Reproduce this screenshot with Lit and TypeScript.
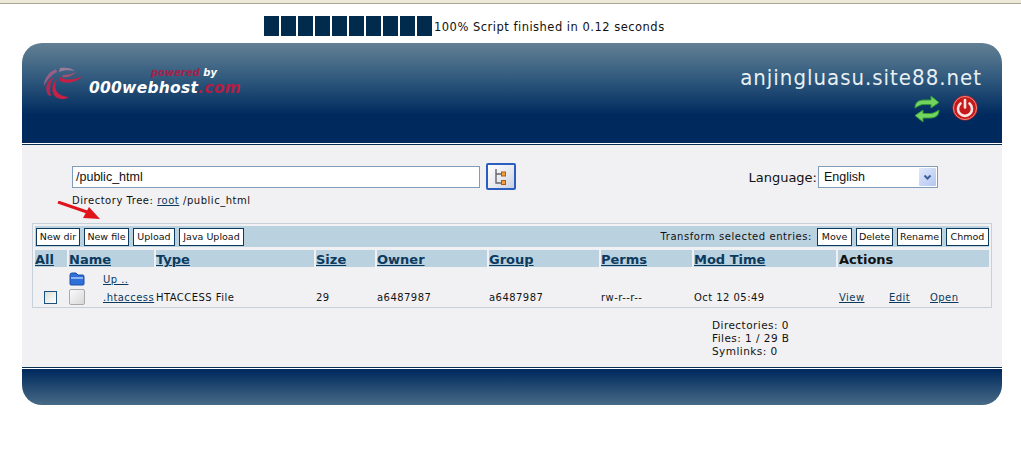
import { LitElement, html, css, svg } from "lit";
import { customElement } from "lit/decorators.js";

const HEAD = ["All", "Name", "Type", "Size", "Owner", "Group", "Perms", "Mod Time"];
const LEFT_BTNS: [string, number][] = [["New dir", 44], ["New file", 45], ["Upload", 42], ["Java Upload", 65]];
const RIGHT_BTNS: [string, number][] = [["Move", 35], ["Delete", 37], ["Rename", 45], ["Chmod", 43]];

@customElement("app-root")
export class AppRoot extends LitElement {
  static styles = css`
    :host { display: block; width: 1021px; height: 464px; background: #fff; overflow: hidden;
      font-family: "DejaVu Sans", Verdana, sans-serif; font-size: 10px; color: #111; }
    * { box-sizing: border-box; }
    a { color: #0b3a5e; text-decoration: underline; }
    .chrome { height: 4px; background: #ece9d8; border-bottom: 1px solid #a9a692; }
    .progress { height: 39px; padding: 12px 0 0 264px; display: flex; align-items: flex-start; gap: 2px; }
    .seg { width: 15px; height: 20px; background: #002b4d; }
    .ptext { font-size: 11.5px; line-height: 22px; letter-spacing: 0.49px; }
    .panel { margin: 0 19px 0 22px; width: 980px; }
    .head { height: 100px; border-radius: 20px 20px 0 0; display: flex; justify-content: space-between;
      background: linear-gradient(#638094 0%, #315a7e 35%, #002a5e 72%, #002a5e 100%); }
    .logo { padding: 24px 0 0 20px; display: flex; align-items: flex-start; }
    .logotext { margin-left: 3px; width: 155px; }
    .powered { text-align: right; padding-right: 27px; font: italic bold 10px/11px "DejaVu Sans", sans-serif; color: #fff; }
    .powered span { color: #a3224a; }
    .brand span { color: #b51c44; }
    .brand { font: italic bold 15.5px/20px "DejaVu Sans", sans-serif; color: #fff; white-space: nowrap; letter-spacing: .25px; }
    .site { padding: 21px 20px 0 0; text-align: right; }
    .domain { font-family: "DejaVu Sans Condensed", "DejaVu Sans", sans-serif; font-stretch: condensed; font-size: 22px; line-height: 28px; color: #e8f0f2; white-space: nowrap; letter-spacing: 1px; }
    .acts { display: flex; justify-content: flex-end; gap: 11px; padding: 3px 4px 0 0; }
    .rule { height: 3px; background: linear-gradient(#fff 0 1px, #0a2f55 1px 2px, #f1f1f4 2px); }
    .body { height: 221px; background: #f1f1f4; padding: 20px 10px 0; }
    .pathrow { display: flex; align-items: flex-start; padding-left: 40px; }
    .path { width: 408px; height: 22px; border: 1px solid #7f9db9; background: #fff;
      font: 12.5px/20px "Liberation Sans", Tahoma, sans-serif; padding-left: 3px; }
    .tree { width: 30px; height: 27px; margin: -3px 0 0 6px; border: 2px solid #2a5fc0; border-radius: 2px;
      background: linear-gradient(135deg, #fff, #e8eaf0 55%, #c6cfe0); display: flex; align-items: center; justify-content: center; }
    .lang { margin-left: auto; margin-right: 54px; display: flex; align-items: flex-start; font-size: 13px; line-height: 23px; }
    .select { width: 120px; height: 22px; margin-left: 1px; border: 1px solid #7f9db9; background: #fff; display: flex;
      justify-content: space-between; font: 12.5px/21px "Liberation Sans", Tahoma, sans-serif; padding: 0 1px 0 5px; }
    .arrow { width: 17px; height: 18px; margin-top: 1px; background: linear-gradient(135deg, #e0e8fb, #b3c6f2); border-radius: 1px;
      display: flex; align-items: center; justify-content: center; }
    .dirtree { padding: 4px 0 0 40px; height: 20px; position: relative; line-height: 14px; letter-spacing: .53px; }
    .redarrow { position: absolute; left: 25px; top: 11px; }
    .table { height: 85px; margin-top: 13px; width: 960px; border: 1px solid #c6d1da; padding: 2px; }
    .bar { height: 21px; background: #bad1e0; display: flex; align-items: center; padding: 0 0 0 1px; gap: 4px; }
    .btn { height: 18px; border: 1px solid #0b3a5e; background: #fff; line-height: 15px; font-size: 9.5px; white-space: nowrap; color: #111; text-align: center; }
    .transform { margin-left: auto; margin-right: 1px; font-size: 10px; letter-spacing: .56px; }
    .grid { display: grid; grid-template-columns: 34px 87px 160px 61px 112px 112px 93px 144px 151px; margin-top: 3px; }
    .th { height: 17px; background: #bad1e0; margin-right: 2px; margin-bottom: 3px; font: bold 13px/19px "DejaVu Sans", sans-serif; }
    .th a { color: #0b3a5e; }
    .th.actions { margin-right: 0; color: #111; padding-left: 1px; }
    .row { height: 18px; line-height: 17px; font-size: 10px; white-space: nowrap; letter-spacing: .45px; display: flex; align-items: center; }
    .cell-up { grid-column: 3 / span 7; margin-left: -53px; }
    .htfile { margin-left: 18px; }
    .cb { width: 13px; height: 13px; margin-left: 9px; border: 1px solid #1c5180; background: linear-gradient(135deg, #dcdcd6, #fff); }
    .links { display: flex; padding-left: 1px; }
    .links a:nth-child(1) { width: 50px; } .links a:nth-child(2) { width: 41px; }
    .stats { margin: 11px 0 0 680px; line-height: 13px; letter-spacing: .45px; font-size: 10.5px; }
    .foot { height: 35px; border-radius: 0 0 20px 20px; background: linear-gradient(#002a5e, #476a86); }
    .rule2 { height: 3px; background: linear-gradient(#0a2f55 0 1px, #fff 1px 2px, #002a5e 2px); }
    .file { width: 16px; height: 16px; border: 1px solid #aaa; border-radius: 2px; background: linear-gradient(135deg, #fafafa, #d8d8d8); display: block; }
    .icon { display: block; }
  `;

  private logo() {
    return svg`<svg class="icon" width="44" height="34" viewBox="0 0 44 34" fill="none">
      <path d="M14 2 C7 5 2 11 2 19 C5 13 9 8 15 5 Z" fill="#9a5f86"/>
      <path d="M18 1 C24 0 30 1 33 4 C27 3 22 3 17 5 Z" fill="#9a7b98"/>
      <path d="M6 28 C2 21 5 13 12 10 C8 16 7 22 9 29 Z" fill="#b02a50"/>
      <path d="M15 13 C11 21 14 29 27 30 C23 33 15 33 12 28 C9 23 10 16 15 13 Z" fill="#c81f45"/>
      <path d="M18 10 C24 14 33 13 40 9 C37 14 26 18 18 14 Z" fill="#c81f45"/>
      <path d="M21 8 C26 8 30 7 34 5 C31 9 25 11 20 10 Z" fill="#a5506f"/>
    </svg>`;
  }
  private refresh() {
    return svg`<svg class="icon" width="28" height="28" viewBox="0 0 28 28">
      <path d="M2 13 C2 7 6 5 11 5 L18 5 L18 1 L26 7.5 L18 13 L18 9.5 L11 9.5 C8 9.5 6 10.5 2 13 Z" fill="#74d460" stroke="#2f9a36"/>
      <path d="M26 15 C26 21 22 23 17 23 L10 23 L10 27 L2 20.5 L10 15 L10 18.5 L17 18.5 C20 18.5 22 17.5 26 15 Z" fill="#74d460" stroke="#2f9a36"/>
    </svg>`;
  }
  private power() {
    return svg`<svg class="icon" width="26" height="26" viewBox="0 0 26 26">
      <circle cx="13" cy="13" r="12.5" fill="#c41a1c"/>
      <circle cx="13" cy="13" r="11.5" fill="none" stroke="#ee8a80" stroke-width="1"/>
      <path d="M8.5 8.5 A7 7 0 1 0 17.5 8.5" fill="none" stroke="#fbe4e0" stroke-width="2.6" stroke-linecap="round"/>
      <path d="M13 5 V12.5" stroke="#fbe4e0" stroke-width="2.6" stroke-linecap="round"/>
    </svg>`;
  }
  private btn([label, w]: [string, number]) {
    return html`<div class="btn" style="width:${w}px">${label}</div>`;
  }

  render() {
    return html`
      <div class="chrome"></div>
      <div class="progress">
        ${Array.from({ length: 10 }, () => html`<div class="seg"></div>`)}
        <div class="ptext">100% Script finished in 0.12 seconds</div>
      </div>
      <div class="panel">
        <div class="head">
          <div class="logo">
            ${this.logo()}
            <div class="logotext">
              <div class="powered"><span>powered</span> by</div>
              <div class="brand">000webhost<span>.com</span></div>
            </div>
          </div>
          <div class="site">
            <div class="domain">anjingluasu.site88.net</div>
            <div class="acts">${this.refresh()}${this.power()}</div>
          </div>
        </div>
        <div class="rule"></div>
        <div class="body">
          <div class="pathrow">
            <div class="path">/public_html</div>
            <div class="tree">
              <svg width="16" height="18" viewBox="0 0 16 18" fill="none">
                <path d="M3 1 V15 H9 M3 6 H9" stroke="#666" stroke-width="1.4"/>
                <rect x="8.5" y="4" width="4" height="4" fill="#f0a040" stroke="#b35a10"/>
                <rect x="8.5" y="12.5" width="4" height="4" fill="#f0a040" stroke="#b35a10"/>
              </svg>
            </div>
            <div class="lang">Language:
              <div class="select">English
                <div class="arrow"><svg width="9" height="7" viewBox="0 0 9 7" fill="none"><path d="M1.5 1.5 L4.5 4.5 L7.5 1.5" stroke="#3d5f96" stroke-width="2"/></svg></div>
              </div>
            </div>
          </div>
          <div class="dirtree">Directory Tree: <a href="#">root</a> /public_html
            <svg class="redarrow" width="44" height="19" viewBox="0 0 44 19">
              <path d="M1 1 L30 11" stroke="#e0141c" stroke-width="3"/>
              <path d="M43 18 L26 17 L32 6 Z" fill="#e0141c"/>
            </svg>
          </div>
          <div class="table">
            <div class="bar">
              ${LEFT_BTNS.map((b) => this.btn(b))}
              <div class="transform">Transform selected entries:</div>
              ${RIGHT_BTNS.map((b) => this.btn(b))}
            </div>
            <div class="grid">
              ${HEAD.map((h) => html`<div class="th"><a href="#">${h}</a></div>`)}
              <div class="th actions">Actions</div>

              <div class="row"></div>
              <div class="row"><svg class="icon" width="16" height="14" viewBox="0 0 16 14"><path d="M1 3 Q1 1 3 1 H7 L9 3 H14 Q15 3 15 5 V12 Q15 13 14 13 H2 Q1 13 1 12 Z" fill="#2f6fd8" stroke="#1c4fa8"/><path d="M2 5 H14 V7 H2 Z" fill="#8cb4f0"/></svg></div>
              <div class="row cell-up"><a href="#">Up ..</a></div>

              <div class="row"><div class="cb"></div></div>
              <div class="row"><div class="file"></div><a href="#" class="htfile">.htaccess</a></div>
              <div class="row">HTACCESS File</div>
              <div class="row">29</div>
              <div class="row">a6487987</div>
              <div class="row">a6487987</div>
              <div class="row">rw-r--r--</div>
              <div class="row">Oct 12 05:49</div>
              <div class="row links"><a href="#">View</a><a href="#">Edit</a><a href="#">Open</a></div>
            </div>
          </div>
          <div class="stats">Directories: 0<br />Files: 1 / 29 B<br />Symlinks: 0</div>
        </div>
        <div class="rule2"></div>
        <div class="foot"></div>
      </div>
    `;
  }
}
